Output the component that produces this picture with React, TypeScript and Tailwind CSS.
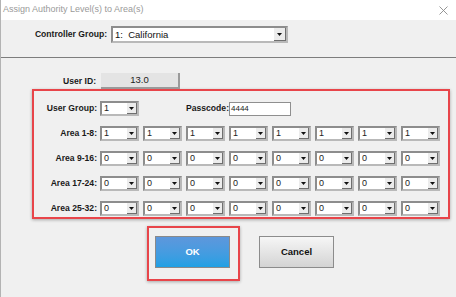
import { ReactNode } from "react";

const FONT = "font-['Liberation_Sans',Arial,sans-serif]";

function Caret({ size = 5 }: { size?: number }) {
  return (
    <svg width={size} height={3} viewBox="0 0 5 3">
      <path d="M0 0h5L2.5 3z" fill="#111" />
    </svg>
  );
}

function Combo({ value, width = "w-[39px]" }: { value: string; width?: string }) {
  return (
    <div className={`flex h-[15px] ${width} border-2 border-t-[#8d8d8d] border-l-[#8d8d8d] border-r-[#b9b9b9] border-b-[#b9b9b9] bg-white`}>
      <span className="flex-1 pl-[2px] text-[9px] leading-[11px] text-[#222]">{value}</span>
      <span className="flex w-[10px] items-center justify-center border-r border-b border-[#6f6f6f] bg-[#ececec]">
        <Caret />
      </span>
    </div>
  );
}

function Label({ children, width }: { children: ReactNode; width: string }) {
  return <span className={`${width} whitespace-nowrap text-right text-[8.6px] font-bold leading-[15px] text-[#1a1a1a]`}>{children}</span>;
}

function AreaRow({ label, value }: { label: string; value: string }) {
  return (
    <div className="flex items-center">
      <Label width="w-[63px]">{label}</Label>
      <div className="ml-[3px] flex gap-[4px]">
        {Array.from({ length: 8 }).map((_, i) => (
          <Combo key={i} value={value} />
        ))}
      </div>
    </div>
  );
}

export default function App() {
  return (
    <div className={`h-[297px] w-[456px] overflow-hidden border-l border-[#b3b3b3] bg-[#f0f0f0] ${FONT}`}>
      {/* title bar */}
      <div className="flex h-[20px] items-center justify-between bg-white pl-[2px] pr-[8px]">
        <span className="text-[9px] text-[#9a9a9a]">Assign Authority Level(s) to Area(s)</span>
        <svg width="9" height="9" viewBox="0 0 9 9">
          <path d="M0.5 0.5l8 8M8.5 0.5l-8 8" stroke="#8a8a8a" strokeWidth="0.9" />
        </svg>
      </div>

      {/* controller group */}
      <div className="flex h-[37px] items-start pt-[6px]">
        <span className="w-[106px] text-right text-[8.6px] font-bold leading-[17px] text-[#1a1a1a]">Controller Group:</span>
        <div className="ml-[4px] flex h-[17px] w-[177px] border-2 border-t-[#8d8d8d] border-l-[#8d8d8d] border-r-[#b9b9b9] border-b-[#b9b9b9] bg-white">
          <span className="flex-1 pl-[2px] text-[9.5px] leading-[13px] text-[#111]">1:&nbsp; California</span>
          <span className="flex w-[12px] items-center justify-center border-r border-b border-[#6f6f6f] bg-[#ececec]">
            <Caret />
          </span>
        </div>
      </div>
      <div className="h-px bg-[#7d7d7d]" />

      {/* user id */}
      <div className="mt-[15px] flex items-center">
        <Label width="w-[95px]">User ID:</Label>
        <div className="ml-[5px] flex h-[16px] w-[79px] items-center justify-center border-r-2 border-b-2 border-[#9a9a9a] bg-[#e4e4e4] text-[9.5px] text-[#222]">
          13.0
        </div>
      </div>

      {/* authority levels */}
      <div className="ml-[31px] h-[130px] w-[418px] border-2 border-[#e8454a] pt-[10px] shadow-[0_1px_3px_rgba(0,0,0,0.3)]">
        <div className="flex flex-col gap-[10px]">
          <div className="flex items-center">
            <Label width="w-[63px]">User Group:</Label>
            <div className="ml-[3px]">
              <Combo value="1" />
            </div>
            <Label width="ml-[46px] w-[44px] text-left">Passcode:</Label>
            <div className="flex h-[14px] w-[62px] items-center border border-[#8f8f8f] bg-white pl-[1px] text-[8px] text-[#222]">4444</div>
          </div>
          <AreaRow label="Area 1-8:" value="1" />
          <AreaRow label="Area 9-16:" value="0" />
          <AreaRow label="Area 17-24:" value="0" />
          <AreaRow label="Area 25-32:" value="0" />
        </div>
      </div>

      {/* buttons */}
      <div className="mt-[7px] ml-[146px] flex items-start">
        <div className="h-[55px] w-[93px] border-2 border-[#e8454a] pt-[8px] pl-[6px] shadow-[0_1px_3px_rgba(0,0,0,0.3)]">
          <button className="flex h-[32px] w-[75px] items-center justify-center border border-[#8a8a8a] bg-gradient-to-b from-[#5d97dc] to-[#1ea0e4] text-[9.5px] font-bold text-white">
            OK
          </button>
        </div>
        <button className="mt-[10px] ml-[19px] flex h-[32px] w-[75px] items-center justify-center border border-[#8c8c8c] bg-gradient-to-b from-[#f6f6f6] to-[#d4d4d4] text-[9.5px] font-bold text-[#111]">
          Cancel
        </button>
      </div>
    </div>
  );
}
